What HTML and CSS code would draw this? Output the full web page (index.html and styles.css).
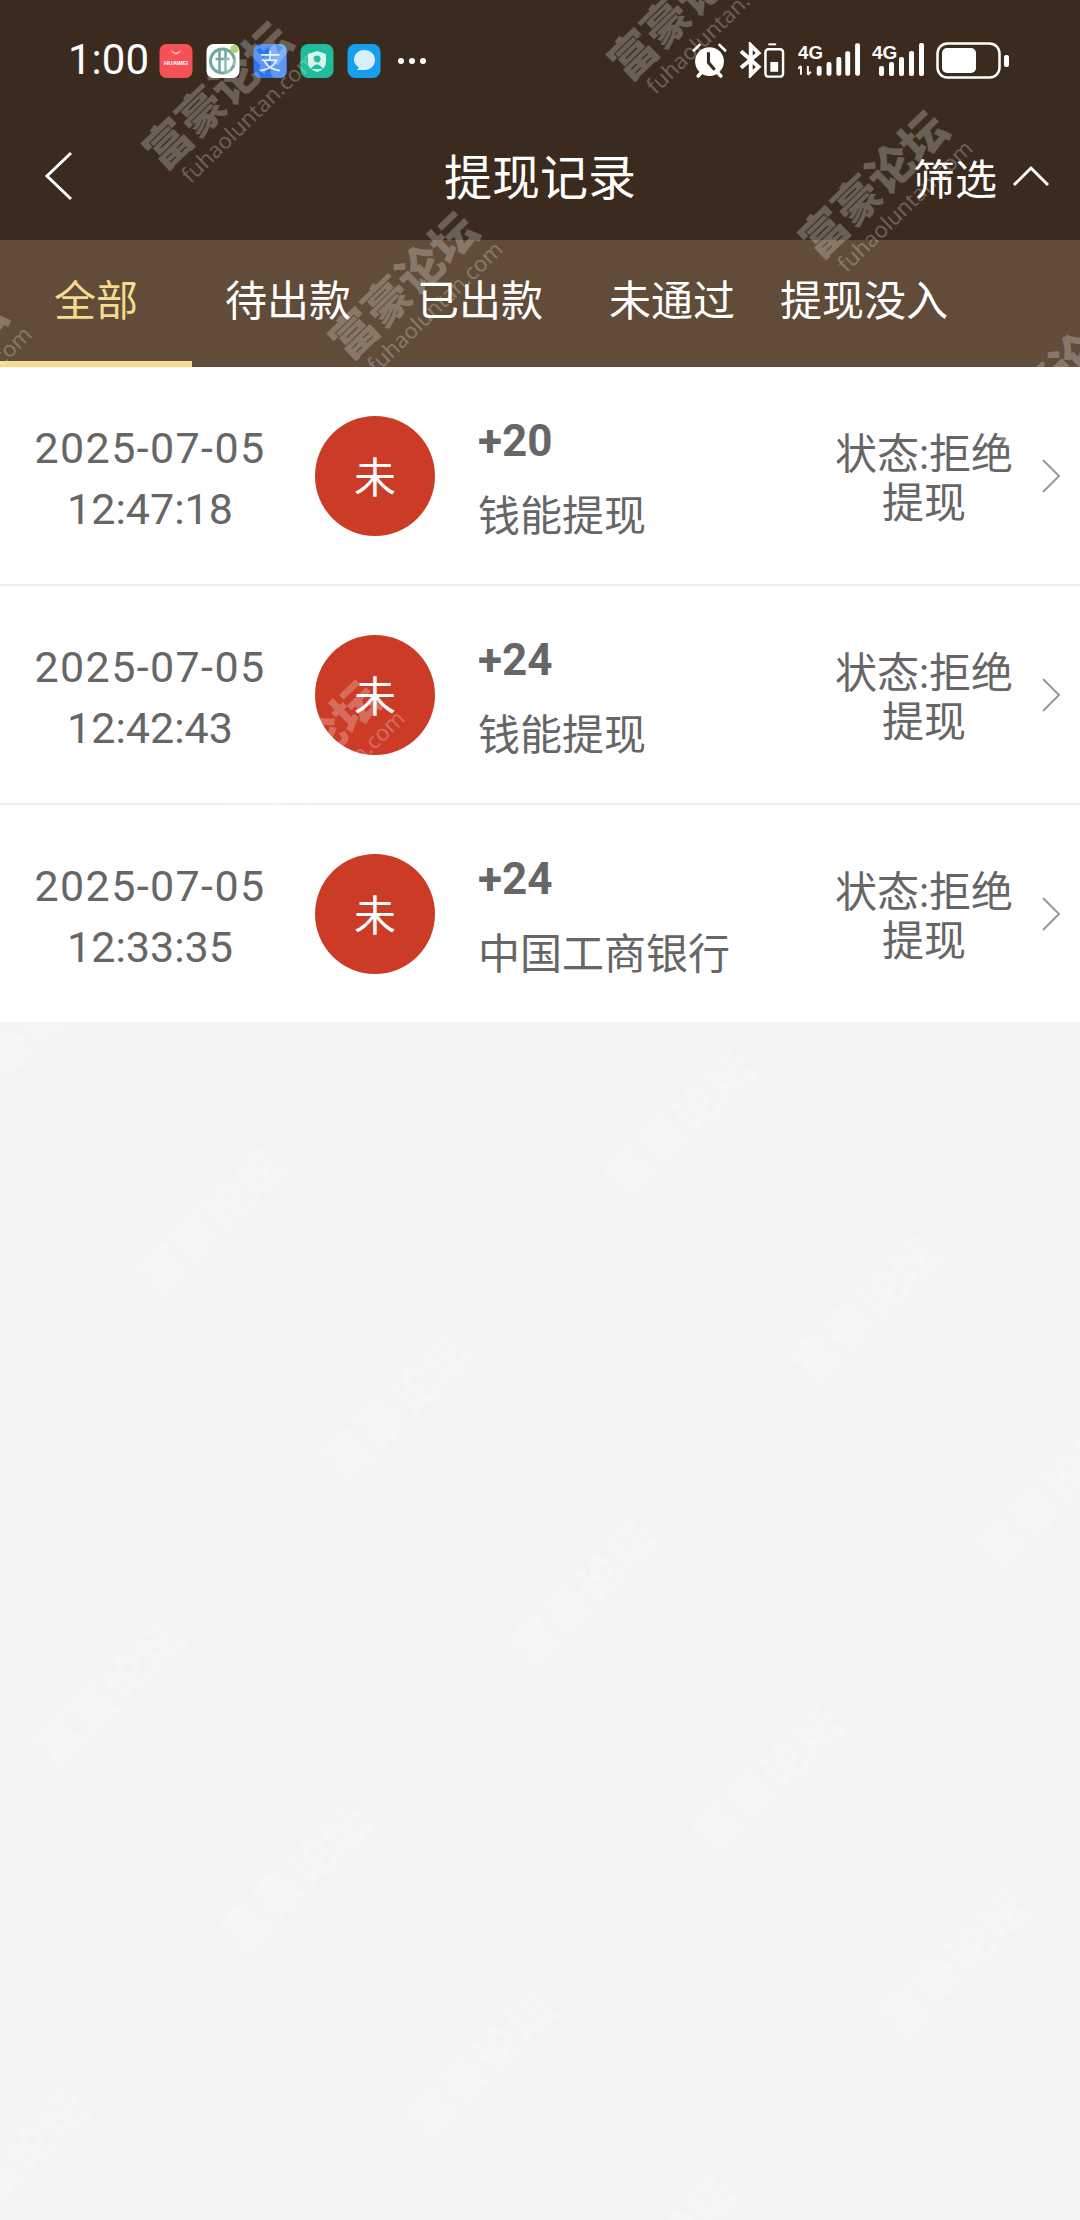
FILE: index.html
```html
<!DOCTYPE html>
<html lang="zh-CN">
<head>
  <meta charset="UTF-8" />
  <meta name="viewport" content="width=device-width, initial-scale=1.0"/>
  <title>提现记录</title>
  <link rel="stylesheet" href="styles.css">
</head>
<body>
  <div class="page">
    <header class="topbar">
      <div class="status">
        <span class="clock">1:00</span>
        <div class="notify">
          <svg class="app" viewBox="0 0 33 34"><rect width="33" height="34" rx="7" fill="#f5515a"/><path d="M12 7q4.500 5 9 0" fill="none" stroke="#fff" stroke-width="1"/><text x="16.500" y="21" class="app-huawei">HUAWEI</text></svg>
          <svg class="app" viewBox="0 0 33 34"><rect width="33" height="34" rx="7" fill="#fff"/><circle cx="16" cy="17" r="12" fill="none" stroke="#6ea99a" stroke-width="3"/><path d="M13 5v24M19 5v24M9 15h14" fill="none" stroke="#6ea99a" stroke-width="2.500"/><circle cx="28" cy="5" r="4" fill="#a9d66e"/></svg>
          <svg class="app" viewBox="0 0 33 34"><rect width="33" height="34" rx="7" fill="#2f74ea"/><rect x="17" y="0" width="16" height="34" rx="6" fill="#5c98f2"/><text x="16.500" y="25" class="app-ali">支</text></svg>
          <svg class="app" viewBox="0 0 33 34"><rect width="33" height="34" rx="8" fill="#1fbd9d"/><path d="M16.500 7l9 3v8q0 7-9 10q-9-3-9-10v-8z" fill="#d8f4ec"/><circle cx="16.500" cy="15" r="3.500" fill="#1fbd9d"/><path d="M10.500 25q6-9 12 0z" fill="#1fbd9d"/></svg>
          <svg class="app" viewBox="0 0 33 34"><rect width="33" height="34" rx="8" fill="#14a0ee"/><path d="M16.500 6c7 0 11 4.500 11 10s-4 10-11 10h-7l2-2.500c-3-2-5-4.500-5-7.500c0-5.500 4-10 10-10z" fill="#d6f0fb"/></svg>
          <span class="more"><i></i><i></i><i></i></span>
        </div>
        <div class="sys">
          <svg class="sys-alarm" viewBox="0 0 36 36">
            <path d="M2 9l7-7M27 2l7 7" stroke="#fff" stroke-width="2.500" fill="none"/>
            <circle cx="18" cy="19" r="14" fill="#fff"/>
            <path d="M17 10v10l6 7" stroke="#3a2b1e" stroke-width="3" fill="none"/>
            <path d="M7 33l3-3M29 33l-3-3" stroke="#fff" stroke-width="3.500" stroke-linecap="round"/>
          </svg>
          <svg class="sys-bt" viewBox="0 0 48 36">
            <path d="M2 9l18 16l-8 8V3l8 8L2 26" fill="none" stroke="#fff" stroke-width="4"/>
            <path d="M30 2h8" stroke="#fff" stroke-width="2"/>
            <rect x="27" y="7" width="18" height="28" rx="3" fill="none" stroke="#fff" stroke-width="2.500"/>
            <rect x="32" y="20" width="8" height="10" fill="#fff"/>
          </svg>
          <svg class="sys-sig1" viewBox="0 0 64 36">
            <text x="0" y="17" class="sig-text">4G</text>
            <path d="M3 24v9M0 27l3-3M10 24v9M10 33l3-3" stroke="#fff" stroke-width="2" fill="none"/>
            <rect x="19" y="24" width="5" height="10" rx="2" fill="#fff"/>
            <rect x="29" y="20" width="5" height="14" rx="2" fill="#fff"/>
            <rect x="39" y="15" width="5" height="19" rx="2" fill="#fff"/>
            <rect x="48" y="9" width="5" height="25" rx="2" fill="#fff"/>
            <rect x="58" y="1" width="5" height="33" rx="2" fill="#fff"/>
          </svg>
          <svg class="sys-sig2" viewBox="0 0 52 36">
            <text x="0" y="17" class="sig-text">4G</text>
            <rect x="7" y="24" width="5" height="10" rx="2" fill="#fff"/>
            <rect x="17" y="20" width="5" height="14" rx="2" fill="#fff"/>
            <rect x="27" y="15" width="5" height="19" rx="2" fill="#fff"/>
            <rect x="37" y="9" width="5" height="25" rx="2" fill="#fff"/>
            <rect x="47" y="1" width="5" height="33" rx="2" fill="#fff"/>
          </svg>
          <svg class="sys-batt" viewBox="0 0 73 37">
            <rect x="1.500" y="1.500" width="62" height="34" rx="10" fill="none" stroke="#fff" stroke-width="2.500"/>
            <rect x="6" y="6" width="34" height="25" rx="5" fill="#fff"/>
            <rect x="68" y="13" width="5" height="12" rx="2" fill="#fff"/>
          </svg>
        </div>
      </div>
      <div class="nav">
        <svg class="back" viewBox="0 0 30 50"><path d="M27 2L3 25l24 23" fill="none" stroke="#fff" stroke-width="3"/></svg>
        <h1>提现记录</h1>
        <div class="filter">
          <span>筛选</span>
          <svg class="caret" viewBox="0 0 38 22"><path d="M2 20L19 3l17 17" fill="none" stroke="#fff" stroke-width="3"/></svg>
        </div>
      </div>
    </header>

    <nav class="tabs">
      <a class="tab active">全部</a>
      <a class="tab">待出款</a>
      <a class="tab">已出款</a>
      <a class="tab">未通过</a>
      <a class="tab">提现没入</a>
    </nav>

    <ul class="list">
      <li class="row">
        <div class="date"><span class="day">2025-07-05</span><br>12:47:18</div>
        <div class="badge">未</div>
        <div class="info"><b>+20</b><span>钱能提现</span></div>
        <div class="state">状态:拒绝<br>提现</div>
        <svg class="arrow" viewBox="0 0 20 36"><path d="M2 2l16 16L2 34" fill="none" stroke="#999" stroke-width="2"/></svg>
      </li>
      <li class="row">
        <div class="date"><span class="day">2025-07-05</span><br>12:42:43</div>
        <div class="badge">未</div>
        <div class="info"><b>+24</b><span>钱能提现</span></div>
        <div class="state">状态:拒绝<br>提现</div>
        <svg class="arrow" viewBox="0 0 20 36"><path d="M2 2l16 16L2 34" fill="none" stroke="#999" stroke-width="2"/></svg>
      </li>
      <li class="row">
        <div class="date"><span class="day">2025-07-05</span><br>12:33:35</div>
        <div class="badge">未</div>
        <div class="info"><b>+24</b><span>中国工商银行</span></div>
        <div class="state">状态:拒绝<br>提现</div>
        <svg class="arrow" viewBox="0 0 20 36"><path d="M2 2l16 16L2 34" fill="none" stroke="#999" stroke-width="2"/></svg>
      </li>
    </ul>

    <!-- forum watermark lies over the whole screenshot -->
    <svg class="watermark" viewBox="0 0 1080 2220">
      <defs>
        <g id="mark" transform="rotate(-44)">
          <text x="-92" y="15" class="wm-name">富豪论坛</text>
          <text x="-81" y="43" class="wm-url">fuhaoluntan.com</text>
        </g>
      </defs>
      <use href="#mark" x="219" y="97"/>
      <use href="#mark" x="684" y="8"/>
      <use href="#mark" x="875" y="186"/>
      <use href="#mark" x="405" y="287"/>
      <use href="#mark" x="-66" y="372"/>
      <use href="#mark" x="1059" y="375"/>
      <use href="#mark" x="307" y="756"/>
      <use href="#mark" x="27" y="1037"/>
      <use href="#mark" x="681" y="1125"/>
      <use href="#mark" x="213" y="1223"/>
      <use href="#mark" x="867" y="1311"/>
      <use href="#mark" x="399" y="1408"/>
      <use href="#mark" x="1053" y="1496"/>
      <use href="#mark" x="-73" y="1544"/>
      <use href="#mark" x="585" y="1595"/>
      <use href="#mark" x="111" y="1694"/>
      <use href="#mark" x="769" y="1781"/>
      <use href="#mark" x="297" y="1879"/>
      <use href="#mark" x="955" y="1965"/>
      <use href="#mark" x="483" y="2066"/>
      <use href="#mark" x="15" y="2165"/>
      <use href="#mark" x="665" y="2251"/>
    </svg>
  </div>
</body>
</html>
```

FILE: styles.css
```css
* {
  box-sizing: border-box;
}

body {
  margin: 0;
  background-color: #f4f4f4;
  font-family: Roboto, "Noto Sans CJK SC", sans-serif;
}

.page {
  position: relative;
  height: 2220px;
  overflow: hidden;
}

/* top bar */
.topbar {
  height: 240px;
  background-color: #3a2b1e;
  color: #fff;
}

.status {
  height: 112px;
  padding: 42px 71px 0 68px;
  display: flex;
  align-items: flex-start;
}

.clock {
  font-size: 42px;
  line-height: 36px;
  width: 91px;
}

.notify {
  display: flex;
  align-items: center;
  gap: 13px;
  margin-top: 2px;
}

.app {
  width: 34px;
  height: 34px;
}

.app-huawei {
  font-family: "Liberation Sans", sans-serif;
  font-size: 6px;
  font-weight: bold;
  fill: #fff;
  text-anchor: middle;
}

.app-ali {
  font-family: "Noto Sans CJK SC", sans-serif;
  font-size: 22px;
  fill: #dff0ff;
  text-anchor: middle;
}

.more {
  display: flex;
  gap: 5px;
  margin-left: 4px;
}

.more i {
  width: 6px;
  height: 6px;
  border-radius: 50%;
  background-color: #fff;
}

.sys {
  margin-left: auto;
  display: flex;
  align-items: center;
  height: 36px;
}

.sys-alarm {
  width: 37px;
  height: 37px;
}

.sys-bt {
  width: 47px;
  height: 36px;
  margin-left: 11px;
}

.sys-sig1 {
  width: 63px;
  height: 36px;
  margin-left: 12px;
}

.sys-sig2 {
  width: 52px;
  height: 36px;
  margin-left: 11px;
}

.sys-batt {
  width: 73px;
  height: 37px;
  margin-left: 12px;
}

.sig-text {
  font-family: "Liberation Sans", sans-serif;
  font-size: 19px;
  font-weight: bold;
  fill: #fff;
}

.nav {
  height: 128px;
  padding: 0 30px;
  display: grid;
  grid-template-columns: 1fr auto 1fr;
  align-items: center;
}

.back {
  width: 30px;
  height: 50px;
  margin-left: 14px;
}

.nav h1 {
  margin: 0 0 4px;
  font-size: 48px;
  font-weight: 400;
}

.filter {
  justify-self: end;
  display: flex;
  align-items: center;
  gap: 15px;
  font-size: 42px;
}

.caret {
  width: 38px;
  height: 22px;
}

/* tabs */
.tabs {
  height: 127px;
  background-color: #604c38;
  display: grid;
  grid-template-columns: repeat(5, 192px);
}

.tab {
  display: flex;
  align-items: center;
  justify-content: center;
  padding-bottom: 12px;
  font-size: 42px;
  color: #fff;
}

.tab.active {
  color: #f5db8e;
  border-bottom: 6px solid #f5db8e;
  padding-bottom: 6px;
}

/* records */
.list {
  margin: 0;
  padding: 0;
  list-style: none;
  background-color: #fff;
}

.row {
  height: 219px;
  display: flex;
  align-items: center;
  color: #666;
  border-bottom: 2px solid #eee;
}

.row:last-child {
  height: 217px;
  border-bottom: none;
}

.date {
  width: 300px;
  padding-top: 6px;
  text-align: center;
  font-size: 43px;
  line-height: 61px;
}

.day {
  letter-spacing: 1.4px;
}

.badge {
  width: 120px;
  height: 120px;
  margin-left: 15px;
  padding-bottom: 2px;
  border-radius: 50%;
  background-color: #cb3b26;
  color: #fff;
  font-size: 42px;
  display: flex;
  align-items: center;
  justify-content: center;
}

.info {
  width: 340px;
  margin-left: 43px;
  padding-top: 7px;
  display: flex;
  flex-direction: column;
  gap: 18px;
  font-size: 42px;
}

.info b {
  line-height: 58px;
  font-size: 44px;
}

.info span {
  line-height: 58px;
}

.state {
  width: 204px;
  margin-left: 4px;
  padding-top: 6px;
  text-align: center;
  font-size: 42px;
  line-height: 49px;
}

.arrow {
  width: 20px;
  height: 36px;
  margin-left: 15px;
}

/* watermark */
.watermark {
  position: absolute;
  top: 0;
  left: 0;
  width: 1080px;
  height: 2220px;
  pointer-events: none;
}

.wm-name {
  font-family: "Noto Sans CJK SC", sans-serif;
  font-size: 46px;
  font-weight: 900;
  fill: rgba(255, 255, 255, 0.26);
}

.wm-url {
  font-family: "Noto Sans", sans-serif;
  font-size: 22px;
  fill: rgba(255, 255, 255, 0.26);
}
```
